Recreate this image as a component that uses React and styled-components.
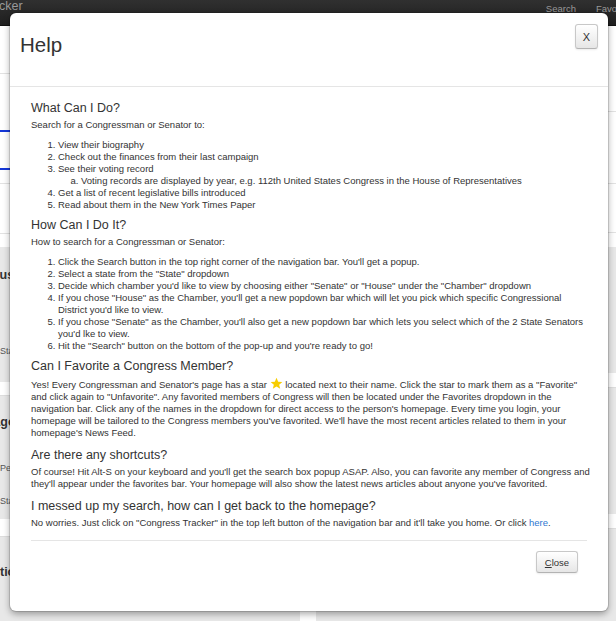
import React from 'react';
import styled, { createGlobalStyle } from 'styled-components';

const GlobalStyle = createGlobalStyle`
  html, body {
    margin: 0;
    padding: 0;
  }
  body {
    font-family: "Liberation Sans", Arial, Helvetica, sans-serif;
    color: #333;
    background: #fff;
    overflow: hidden;
  }
`;

/* ---------- page behind the dialog ---------- */

const Page = styled.div`
  position: relative;
  width: 616px;
  height: 621px;
  overflow: hidden;
  display: flex;
  flex-direction: column;
`;

const NavBar = styled.header`
  flex: none;
  height: 26px;
  box-sizing: border-box;
  display: flex;
  justify-content: space-between;
  align-items: flex-start;
  background: linear-gradient(#303030, #1f1f1f);
  border-bottom: 1px solid #111;
  white-space: nowrap;
`;

const Brand = styled.a`
  margin-left: -76px;
  font-size: 12.5px;
  line-height: 13px;
  color: #999;
  text-decoration: none;
`;

const NavLinks = styled.nav`
  display: flex;
  gap: 20px;
  margin-right: -19px;
  padding-top: 3px;
`;

const NavLink = styled.a`
  font-size: 9.5px;
  line-height: 12px;
  color: #999;
  text-decoration: none;
`;

const Main = styled.main`
  flex: 1;
  display: flex;
  justify-content: space-between;
  background: #fff;
`;

const Column = styled.div`
  width: 300px;
  display: flex;
  flex-direction: column;
`;

const Row = styled.div`
  flex: none;
  height: ${p => p.h}px;
  box-sizing: border-box;
  border-bottom: ${p =>
    p.accent ? '2px solid #1436d8' : p.plain ? 'none' : '1px solid #e2e2e2'};
`;

const Well = styled.div`
  flex: 1;
  background: #e8e8e8;
  display: flex;
  flex-direction: column;
  align-items: ${p => (p.end ? 'flex-end' : 'flex-start')};
`;

const WellTitle = styled.div`
  margin-top: ${p => p.top}px;
  font-size: 12.5px;
  line-height: 14px;
  font-weight: bold;
  color: #333;
  white-space: nowrap;
  text-indent: ${p => p.cut || 0}px;
`;

const WellText = styled.div`
  margin-top: ${p => p.top}px;
  font-size: 9px;
  line-height: 12px;
  color: #555;
  white-space: nowrap;
`;

const Band = styled.div`
  align-self: stretch;
  margin-top: ${p => p.top}px;
  height: ${p => p.h}px;
  background: #fff;
  border-bottom: 1px solid #ddd;
`;

/* ---------- dialog ---------- */

const Modal = styled.div`
  position: absolute;
  top: 13px;
  left: 10px;
  width: 598px;
  height: 598px;
  background: #fff;
  border-radius: 6px;
  box-shadow: 0 3px 7px rgba(0, 0, 0, 0.35), 0 0 0 1px rgba(0, 0, 0, 0.12);
  display: flex;
  flex-direction: column;
`;

const ModalHeader = styled.div`
  flex: none;
  height: 74px;
  box-sizing: border-box;
  padding: 11px 10px 0 10px;
  display: flex;
  justify-content: space-between;
  align-items: flex-start;
  border-bottom: 1px solid #e5e5e5;
`;

const Title = styled.h3`
  margin: 9px 0 0;
  font-size: 20.5px;
  line-height: 24px;
  font-weight: normal;
  color: #333;
`;

const Button = styled.button`
  width: ${p => p.w}px;
  height: ${p => p.h}px;
  padding: 0;
  font-family: inherit;
  font-size: ${p => p.fs || 9.5}px;
  color: #333;
  background: linear-gradient(#fff, #e6e6e6);
  border: 1px solid #c8c8c8;
  border-bottom-color: #b3b3b3;
  border-radius: 3px;
  box-shadow: inset 0 1px 0 rgba(255, 255, 255, 0.2), 0 1px 2px rgba(0, 0, 0, 0.08);
  cursor: pointer;

  & u {
    text-decoration: underline;
  }
`;

const ModalBody = styled.div`
  flex: 1;
  padding: 14px 18px 0 21px;
  overflow: hidden;
`;

const Heading = styled.h4`
  margin: 0 0 3px;
  font-size: 12.5px;
  line-height: 15px;
  font-weight: normal;
  color: #333;
`;

const Text = styled.p`
  margin: 0 0 ${p => (p.mb != null ? p.mb : 8)}px;
  font-size: 9.5px;
  line-height: 12px;
  color: #333;
`;

const List = styled.ol`
  margin: 0 0 7px;
  padding-left: 27px;
  font-size: 9.5px;
  line-height: 12px;
  color: #333;
  list-style-type: decimal;
`;

const SubList = styled.ol`
  margin: 0;
  padding-left: 23px;
  list-style-type: lower-alpha;
`;

const Link = styled.a`
  color: #2f78d2;
  text-decoration: none;
`;

const StarIcon = styled.svg`
  width: 13px;
  height: 13px;
  vertical-align: -2px;
`;

const ModalFooter = styled.div`
  flex: none;
  height: 71px;
  box-sizing: border-box;
  margin: 0 21px;
  padding: 10px 9px 0 0;
  border-top: 1px solid #e5e5e5;
  display: flex;
  justify-content: flex-end;
  align-items: flex-start;
`;

const Star = () => (
  <StarIcon viewBox="0 0 24 24">
    <path
      d="M12 1.5l3.1 7.1 7.7.6-5.9 5 1.9 7.5L12 17.6l-6.8 4.1 1.9-7.5-5.9-5 7.7-.6z"
      fill="#f7cd00"
    />
  </StarIcon>
);

export default function App() {
  return (
    <>
      <GlobalStyle />
      <Page>
        <NavBar>
          <Brand href="#">Congress Tracker</Brand>
          <NavLinks>
            <NavLink href="#">Search</NavLink>
            <NavLink href="#">Favorites</NavLink>
          </NavLinks>
        </NavBar>
        <Main>
          <Column>
            <Row h={48} />
            <Row h={58} accent />
            <Row h={38} accent />
            <Row h={14} />
            <Row h={50} />
            <Row h={13} plain />
            <Well>
              <WellTitle top={21} cut={-24}>Status</WellTitle>
              <WellText top={63}>State</WellText>
              <Band top={25} h={13} />
              <WellTitle top={19} cut={-49}>Homepage</WellTitle>
              <WellText top={33}>Person</WellText>
              <WellText top={21}>State</WellText>
              <Band top={12} h={17} />
              <WellTitle top={28} cut={-16}>Actions</WellTitle>
            </Well>
          </Column>
          <Column>
            <Row h={86} />
            <Row h={72} />
            <Row h={49} />
            <Row h={14} plain />
            <Well end>
              <Band top={126} h={14} />
              <Band top={126} h={14} />
            </Well>
          </Column>
        </Main>

        <Modal role="dialog" aria-labelledby="help-title">
          <ModalHeader>
            <Title id="help-title">Help</Title>
            <Button w={23} h={25} fs={11}>X</Button>
          </ModalHeader>

          <ModalBody>
            <Heading>What Can I Do?</Heading>
            <Text>Search for a Congressman or Senator to:</Text>
            <List>
              <li>View their biography</li>
              <li>Check out the finances from their last campaign</li>
              <li>
                See their voting record
                <SubList>
                  <li>
                    Voting records are displayed by year, e.g. 112th United States Congress in
                    the House of Representatives
                  </li>
                </SubList>
              </li>
              <li>Get a list of recent legislative bills introduced</li>
              <li>Read about them in the New York Times Paper</li>
            </List>

            <Heading>How Can I Do It?</Heading>
            <Text>How to search for a Congressman or Senator:</Text>
            <List>
              <li>
                Click the Search button in the top right corner of the navigation bar. You'll
                get a popup.
              </li>
              <li>Select a state from the "State" dropdown</li>
              <li>
                Decide which chamber you'd like to view by choosing either "Senate" or "House"
                under the "Chamber" dropdown
              </li>
              <li>
                If you chose "House" as the Chamber, you'll get a new popdown bar which will let
                you pick which specific Congressional District you'd like to view.
              </li>
              <li>
                If you chose "Senate" as the Chamber, you'll also get a new popdown bar which
                lets you select which of the 2 State Senators you'd lke to view.
              </li>
              <li>
                Hit the "Search" button on the bottom of the pop-up and you're ready to go!
              </li>
            </List>

            <Heading>Can I Favorite a Congress Member?</Heading>
            <Text mb={9}>
              Yes! Every Congressman and Senator's page has a star <Star /> located next to
              their name. Click the star to mark them as a "Favorite" and click again to
              "Unfavorite". Any favorited members of Congress will then be located under the
              Favorites dropdown in the navigation bar. Click any of the names in the dropdown
              for direct access to the person's homepage. Every time you login, your homepage
              will be tailored to the Congress members you've favorited. We'll have the most
              recent articles related to them in your homepage's News Feed.
            </Text>

            <Heading>Are there any shortcuts?</Heading>
            <Text mb={9}>
              Of course! Hit Alt-S on your keyboard and you'll get the search box popup ASAP.
              Also, you can favorite any member of Congress and they'll appear under the
              favorites bar. Your homepage will also show the latest news articles about anyone
              you've favorited.
            </Text>

            <Heading>I messed up my search, how can I get back to the homepage?</Heading>
            <Text mb={0}>
              No worries. Just click on "Congress Tracker" in the top left button of the
              navigation bar and it'll take you home. Or click <Link href="#">here</Link>.
            </Text>
          </ModalBody>

          <ModalFooter>
            <Button w={42} h={22}>
              <u>C</u>lose
            </Button>
          </ModalFooter>
        </Modal>
      </Page>
    </>
  );
}
